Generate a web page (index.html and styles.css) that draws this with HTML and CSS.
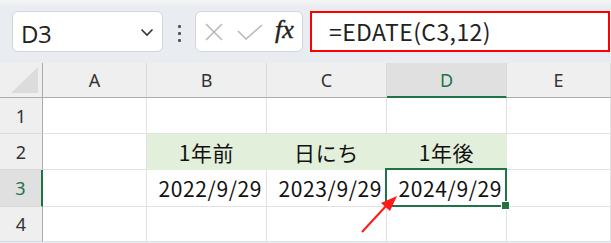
FILE: index.html
```html
<!DOCTYPE html>
<html lang="ja">

<head>
    <meta charset="UTF-8">
    <title>EDATE</title>
    <link rel="stylesheet" href="styles.css">
</head>

<body>

    <div class="toolbar">
        <div class="name-box">
            <span class="name-text">D3</span>
            <svg class="chevron" width="14" height="9" viewBox="0 0 14 9">
                <path d="M1.5 1.5 L7 7 L12.5 1.5" fill="none" stroke="#333" stroke-width="1.6" />
            </svg>
        </div>
        <div class="dots"><span></span><span></span><span></span></div>
        <div class="fx-box">
            <svg width="18" height="18" viewBox="0 0 18 18">
                <path d="M1 1 L17 17 M17 1 L1 17" stroke="#b5b5b5" stroke-width="1.5" fill="none" />
            </svg>
            <svg width="26" height="16" viewBox="0 0 26 16">
                <path d="M1 7 L9 15 L25 1" stroke="#b5b5b5" stroke-width="1.5" fill="none" />
            </svg>
            <span class="fx">fx</span>
        </div>
        <div class="formula">=EDATE(C3,12)</div>
    </div>

    <div class="sheet">
        <div class="corner"><div class="tri"></div></div>
        <div class="col-head">A</div>
        <div class="col-head">B</div>
        <div class="col-head">C</div>
        <div class="col-head active">D</div>
        <div class="col-head">E</div>

        <div class="row-head">1</div>
        <div class="cell"></div>
        <div class="cell"></div>
        <div class="cell"></div>
        <div class="cell"></div>
        <div class="cell"></div>

        <div class="row-head">2</div>
        <div class="cell"></div>
        <div class="cell fill center">1年前</div>
        <div class="cell fill center">日にち</div>
        <div class="cell fill center">1年後</div>
        <div class="cell"></div>

        <div class="row-head active">3</div>
        <div class="cell"></div>
        <div class="cell num">2022/9/29</div>
        <div class="cell num">2023/9/29</div>
        <div class="cell num selected">2024/9/29</div>
        <div class="cell"></div>

        <div class="row-head">4</div>
        <div class="cell"></div>
        <div class="cell"></div>
        <div class="cell"></div>
        <div class="cell"></div>
        <div class="cell"></div>

        <svg class="arrow" width="50" height="50" viewBox="0 0 50 50">
            <path d="M2 36 L26 10" stroke="#ff1a1a" stroke-width="2" fill="none" />
            <path d="M37 0 L21 7 L30 15 Z" fill="#ff1a1a" />
        </svg>
    </div>

</body>

</html>
```

FILE: styles.css
```css
* {
    margin: 0;
    padding: 0;
    box-sizing: border-box;
}

body {
    background: #e9ecf0;
    font-family: 'Noto Sans CJK JP', sans-serif;
    color: #000;
    width: 611px;
    height: 243px;
    overflow: hidden;
}

.toolbar {
    height: 63px;
    padding: 11px 0 0 12px;
    display: flex;
    align-items: flex-start;
    background: linear-gradient(#f4f5f7, #e9ecf0 8px);
}

.name-box {
    width: 151px;
    height: 41px;
    background: #fff;
    border: 1px solid #d3d5d8;
    border-radius: 6px;
    display: flex;
    align-items: center;
    justify-content: space-between;
    padding: 0 8px 0 8px;
}

.name-text {
    font-family: 'Open Sans', sans-serif;
    font-size: 24px;
    color: #222;
    margin-top: 4px;
    letter-spacing: -0.5px;
}

.chevron {
    margin-top: 2px;
}

.dots {
    width: 32px;
    display: flex;
    flex-direction: column;
    align-items: center;
    gap: 4px;
    padding-top: 14px;
}

.dots span {
    width: 3px;
    height: 3px;
    background: #555;
    border-radius: 1px;
}

.fx-box {
    width: 108px;
    height: 41px;
    background: #fff;
    border: 1px solid #d3d5d8;
    border-radius: 6px;
    display: flex;
    align-items: center;
    padding-left: 9px;
    gap: 14px;
}

.fx {
    font-family: 'Liberation Serif', serif;
    font-style: italic;
    font-size: 26px;
    color: #222;
    margin-top: -3px;
    margin-left: -2px;
    -webkit-text-stroke: 0.4px #222;
}

.formula {
    margin-left: 7px;
    width: 300px;
    height: 41px;
    background: #fff;
    border: 2px solid #ff0000;
    padding-left: 17px;
    font-size: 23px;
    line-height: 36px;
    letter-spacing: 0.4px;
    color: #222;
}

.sheet {
    position: relative;
    display: grid;
    grid-template-columns: 43px 104px 120px 120px 120px 104px;
    grid-template-rows: 35px 36px 36px 37px 35px;
    background: #fff;
}

.corner {
    background: #efefef;
    border-right: 1px solid #ababab;
    border-bottom: 1px solid #ababab;
    position: relative;
}

.tri {
    position: absolute;
    right: 4px;
    bottom: 4px;
    width: 27px;
    height: 26px;
    background: #dcdcdc;
    clip-path: polygon(100% 0, 100% 100%, 0 100%);
}

.col-head {
    background: #efefef;
    border-right: 1px solid #d9d9d9;
    border-bottom: 1px solid #ababab;
    display: flex;
    align-items: center;
    justify-content: center;
    font-family: 'Noto Sans', sans-serif;
    font-size: 18px;
    color: #333;
}

.col-head.active {
    background: #e0e0e0;
    border-bottom: 2px solid #217346;
    color: #217346;
    padding-top: 1px;
}

.row-head {
    background: #efefef;
    border-right: 1px solid #ababab;
    border-bottom: 1px solid #d9d9d9;
    display: flex;
    align-items: center;
    justify-content: center;
    font-family: 'Noto Sans', sans-serif;
    font-size: 18px;
    color: #333;
}

.row-head.active {
    background: #e0e0e0;
    border-right: 2px solid #217346;
    color: #217346;
}

.cell {
    border-right: 1px solid #e1e1e1;
    border-bottom: 1px solid #e1e1e1;
    font-size: 21px;
    letter-spacing: 0.6px;
    display: flex;
    align-items: center;
    padding: 0 4px;
    color: #111;
}

.fill {
    background: #e2efda;
    border-color: #e2efda;
}

.center {
    justify-content: center;
}

.num {
    justify-content: flex-end;
}

.selected {
    position: relative;
}

.selected::before {
    content: "";
    position: absolute;
    left: -2px;
    top: -2px;
    right: -1px;
    bottom: -1px;
    border: 2px solid #217346;
}

.selected::after {
    content: "";
    position: absolute;
    right: -4px;
    bottom: -4px;
    width: 7px;
    height: 7px;
    background: #217346;
    border: 1px solid #fff;
}

.arrow {
    position: absolute;
    left: 360px;
    top: 133px;
}
```
